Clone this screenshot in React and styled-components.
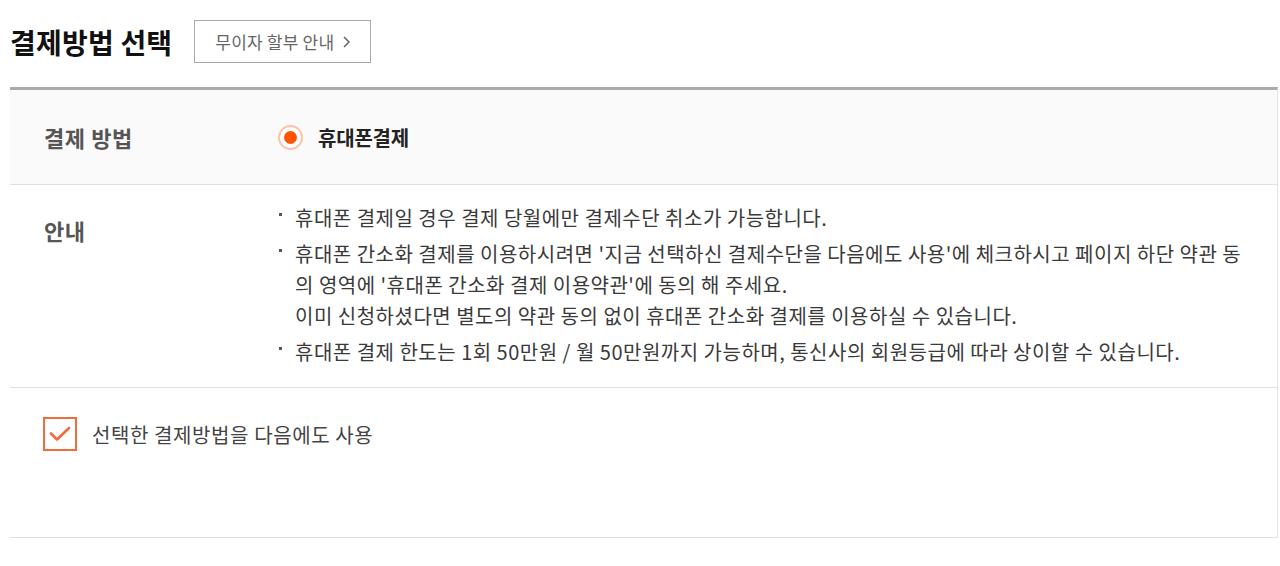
import React from "react";
import styled, { createGlobalStyle } from "styled-components";

const GlobalStyle = createGlobalStyle`
  body {
    margin: 0;
    background: #fff;
    font-family: "Noto Sans CJK KR", "Noto Sans", sans-serif;
    color: #333;
  }
`;

const Page = styled.div`
  padding: 20px 2px 0 10px;
`;

const TitleBar = styled.div`
  display: flex;
  align-items: center;
  gap: 22px;
  margin-bottom: 24px;
`;

const Title = styled.h2`
  margin: 0;
  font-size: 28px;
  font-weight: 700;
  color: #111;
  letter-spacing: 0.2px;
  line-height: 36px;
`;

const GuideButton = styled.button`
  display: flex;
  align-items: center;
  gap: 8px;
  height: 43px;
  padding: 0 18px 0 20px;
  border: 1px solid #a8a8a8;
  background: #fff;
  font-family: inherit;
  font-size: 17px;
  color: #666;
  letter-spacing: 0.2px;
  cursor: pointer;
`;

const Table = styled.div`
  border-top: 3px solid #aaa;
  border-right: 1px solid #e3e3e3;
`;

const Row = styled.div`
  display: grid;
  grid-template-columns: 268px 1fr;
  align-items: ${(p) => (p.$top ? "start" : "center")};
  min-height: ${(p) => p.$height || 0}px;
  padding: ${(p) => p.$pad || "0"};
  background: ${(p) => (p.$shade ? "#fafafa" : "#fff")};
  border-bottom: 1px solid #e0e0e0;
  box-sizing: border-box;
`;

const Label = styled.div`
  padding-left: 34px;
  padding-top: ${(p) => p.$offset || 0}px;
  font-size: 22px;
  font-weight: 700;
  color: #555;
  line-height: 31px;
  letter-spacing: 0.6px;
`;

const RadioLabel = styled.label`
  display: flex;
  align-items: center;
  gap: 15px;
  font-size: 20px;
  font-weight: 700;
  color: #222;
  letter-spacing: -0.2px;
`;

const RadioRing = styled.span`
  width: 25px;
  height: 25px;
  box-sizing: border-box;
  border-radius: 50%;
  border: 2px solid #ffc2ab;
  display: flex;
  align-items: center;
  justify-content: center;
  background: #fff;

  &::after {
    content: "";
    width: 13px;
    height: 13px;
    border-radius: 50%;
    background: #ff5300;
  }
`;

const Notes = styled.ul`
  margin: 0;
  padding: 0;
  list-style: none;
  padding-right: 24px;
`;

const Note = styled.li`
  display: flex;
  font-size: 20px;
  line-height: 31px;
  color: #3a3a3a;
  letter-spacing: 0.5px;
  margin-bottom: 5px;

  &:last-child {
    margin-bottom: 0;
  }
`;

const Dot = styled.span`
  flex: 0 0 17px;
  position: relative;

  &::before {
    content: "";
    position: absolute;
    left: 1px;
    top: 11px;
    width: 3px;
    height: 3px;
    background: #555;
  }
`;

const CheckRow = styled.div`
  height: 150px;
  padding: 29px 0 0 33px;
  border-bottom: 1px solid #e0e0e0;
  box-sizing: border-box;
`;

const CheckLabel = styled.label`
  display: flex;
  align-items: center;
  gap: 15px;
  font-size: 20px;
  color: #444;
  letter-spacing: 0.6px;
`;

const CheckBox = styled.span`
  width: 34px;
  height: 34px;
  box-sizing: border-box;
  border: 2px solid #f26b3a;
  display: flex;
  align-items: center;
  justify-content: center;
  background: #fff;
`;

export default function App() {
  return (
    <Page>
      <GlobalStyle />
      <TitleBar>
        <Title>결제방법 선택</Title>
        <GuideButton>
          무이자 할부 안내
          <svg width="10" height="14" viewBox="0 0 10 14" fill="none">
            <path d="M2 2l5 5-5 5" stroke="#666" strokeWidth="1.5" />
          </svg>
        </GuideButton>
      </TitleBar>

      <Table>
        <Row $shade $height={95}>
          <Label>결제 방법</Label>
          <RadioLabel>
            <RadioRing />
            휴대폰결제
          </RadioLabel>
        </Row>

        <Row $top $pad="17px 0 20px">
          <Label $offset={13}>안내</Label>
          <Notes>
            <Note>
              <Dot />
              <span>휴대폰 결제일 경우 결제 당월에만 결제수단 취소가 가능합니다.</span>
            </Note>
            <Note>
              <Dot />
              <span>
                휴대폰 간소화 결제를 이용하시려면 '지금 선택하신 결제수단을 다음에도 사용'에 체크하시고 페이지 하단 약관 동의 영역에 '휴대폰 간소화 결제 이용약관'에 동의 해 주세요.
                <br />
                이미 신청하셨다면 별도의 약관 동의 없이 휴대폰 간소화 결제를 이용하실 수 있습니다.
              </span>
            </Note>
            <Note>
              <Dot />
              <span>휴대폰 결제 한도는 1회 50만원 / 월 50만원까지 가능하며, 통신사의 회원등급에 따라 상이할 수 있습니다.</span>
            </Note>
          </Notes>
        </Row>

        <CheckRow>
          <CheckLabel>
            <CheckBox>
              <svg width="22" height="16" viewBox="0 0 22 16" fill="none">
                <path d="M2 7.5l6 6L20 2" stroke="#f26b3a" strokeWidth="2.6" strokeLinecap="round" strokeLinejoin="round" />
              </svg>
            </CheckBox>
            선택한 결제방법을 다음에도 사용
          </CheckLabel>
        </CheckRow>
      </Table>
    </Page>
  );
}
